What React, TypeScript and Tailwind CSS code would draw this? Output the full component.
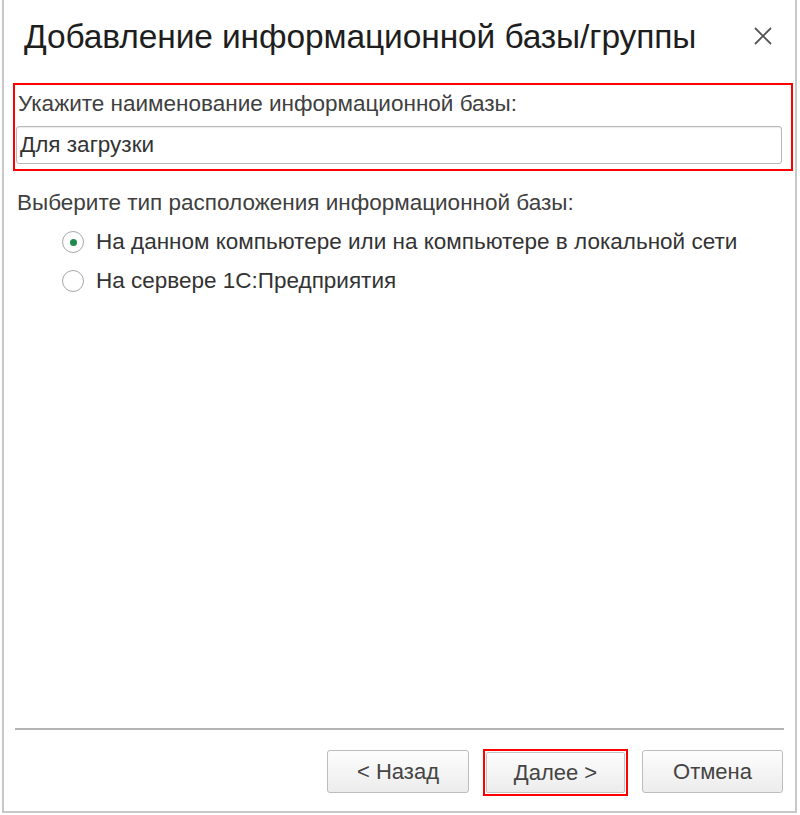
export default function App() {
    return (
        <div className="w-[800px] h-[815px] bg-white" style={{ fontFamily: '"Liberation Sans", Arial, sans-serif' }}>
            <div className="ml-[2px] w-[795px] h-[813px] border-l-2 border-r-2 border-b-2 border-[#c8c8c8] flex flex-col text-[#404040]">
                <div className="flex items-center justify-between pl-[20px] pr-[22px] pt-[16px] h-[58px]">
                    <h1 className="text-[33.5px] text-[#1e1e1e] leading-none tracking-[-0.1px]">Добавление информационной базы/группы</h1>
                    <svg width="20" height="20" viewBox="0 0 20 20" className="text-[#555] mb-[3px]">
                        <path d="M2 2 L18 18 M18 2 L2 18" stroke="currentColor" strokeWidth="1.8" />
                    </svg>
                </div>

                <div className="mt-[25px] ml-[9px] w-[780px] h-[88px] border-2 border-[#ff0000] px-[1px] pt-[7px]">
                    <p className="text-[22.5px] leading-[24px] ml-[2px]">Укажите наименование информационной базы:</p>
                    <div className="mt-[10px] h-[38px] w-[766px] border border-[#b8b8b8] rounded-[3px] flex items-center px-[3px] shadow-[inset_0_1px_1px_rgba(0,0,0,0.08)]">
                        <span className="text-[22.5px] text-[#333]">Для загрузки</span>
                    </div>
                </div>

                <p className="mt-[20px] ml-[13px] text-[22.5px] leading-[24px]">Выберите тип расположения информационной базы:</p>

                <div className="mt-[15px] ml-[58px] flex flex-col gap-[15px]">
                    <label className="flex items-center gap-[12px]">
                        <span className="w-[22px] h-[22px] rounded-full border border-[#a8a8a8] bg-white flex items-center justify-center">
                            <span className="w-[7px] h-[7px] rounded-full bg-[#1f8a4c]" />
                        </span>
                        <span className="text-[22.5px] leading-[24px] text-[#333]">На данном компьютере или на компьютере в локальной сети</span>
                    </label>
                    <label className="flex items-center gap-[12px]">
                        <span className="w-[22px] h-[22px] rounded-full border border-[#a8a8a8] bg-white" />
                        <span className="text-[22.5px] leading-[24px] text-[#333]">На сервере 1С:Предприятия</span>
                    </label>
                </div>

                <div className="flex-1" />

                <div className="mx-[11px] h-[2px] bg-[#b4b4b4]" />

                <div className="flex justify-end gap-[14px] pr-[12px] pt-[19px] pb-[15px]">
                    <button className="w-[142px] h-[43px] mt-[1px] border border-[#bdbdbd] rounded-[3px] bg-gradient-to-b from-[#fdfdfd] to-[#ececec] text-[22px] text-[#444]">&lt; Назад</button>
                    <div className="border-2 border-[#ff0000] p-[1px]">
                        <button className="w-[139px] h-[41px] border border-[#c4c4c4] rounded-[2px] bg-gradient-to-b from-[#fdfdfd] to-[#ececec] text-[22px] text-[#444] block">Далее &gt;</button>
                    </div>
                    <button className="w-[141px] h-[43px] mt-[1px] border border-[#bdbdbd] rounded-[3px] bg-gradient-to-b from-[#fdfdfd] to-[#ececec] text-[22px] text-[#444]">Отмена</button>
                </div>
            </div>
        </div>
    )
}
